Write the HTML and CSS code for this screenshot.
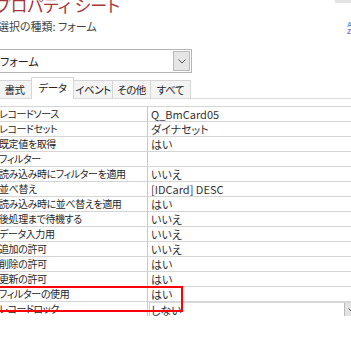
FILE: index.html
```html
<!DOCTYPE html>
<html lang="ja">
<head>
    <meta charset="UTF-8">
    <meta name="viewport" content="width=device-width, initial-scale=1.0">
    <title>プロパティ シート</title>
    <link rel="stylesheet" href="styles.css">
</head>
<body>
    <div class="sheet">
      <header class="head">
        <div class="head-text">
          <h1 class="title">プロパティ シート</h1>
          <div class="kind">選択の種類: フォーム</div>
        </div>
        <div class="head-tools">
          <span class="tool-btn"></span>
          <span class="sort-icon"><span>A</span><span>Z</span></span>
        </div>
      </header>

      <div class="combo">
        <span class="combo-text">フォーム</span>
        <span class="combo-btn">
          <svg width="8" height="5" viewBox="0 0 8 5"><path d="M0.5 0.5 L4 4 L7.5 0.5" fill="none" stroke="#555" stroke-width="1"/></svg>
        </span>
      </div>

      <div class="tabs">
        <span class="tab t1">書式</span>
        <span class="tab t2 active">データ</span>
        <span class="tab t3">イベント</span>
        <span class="tab t4">その他</span>
        <span class="tab t5">すべて</span>
      </div>

      <div class="props">
        <div class="label">レコードソース</div><div class="value">Q_BmCard05</div>
        <div class="label">レコードセット</div><div class="value">ダイナセット</div>
        <div class="label">既定値を取得</div><div class="value">はい</div>
        <div class="label">フィルター</div><div class="value"></div>
        <div class="label">読み込み時にフィルターを適用</div><div class="value">いいえ</div>
        <div class="label">並べ替え</div><div class="value">[IDCard] DESC</div>
        <div class="label">読み込み時に並べ替えを適用</div><div class="value">はい</div>
        <div class="label">後処理まで待機する</div><div class="value">いいえ</div>
        <div class="label">データ入力用</div><div class="value">いいえ</div>
        <div class="label">追加の許可</div><div class="value">いいえ</div>
        <div class="label">削除の許可</div><div class="value">はい</div>
        <div class="label">更新の許可</div><div class="value">はい</div>
        <div class="label">フィルターの使用</div><div class="value">はい</div>
        <div class="label last">レコードロック</div>
        <div class="value last">
          <div class="pick">
            <span class="pick-text">しない</span>
            <span class="pick-btn">
              <svg width="6" height="4" viewBox="0 0 6 4"><path d="M0.5 0.5 L3 3 L5.5 0.5" fill="none" stroke="#555" stroke-width="1"/></svg>
            </span>
          </div>
        </div>

        <div class="highlight"></div>
      </div>
    </div>
</body>
</html>
```

FILE: styles.css
```css
body {
  margin: 0;
  background: #fff;
  color: #2b2b2b;
  font-family: "Noto Sans CJK JP", "Noto Sans", sans-serif;
  font-feature-settings: "palt";
  overflow: hidden;
}

.sheet {
  margin-left: -6px;
  width: 363px;
}

.head {
  display: flex;
  justify-content: space-between;
  height: 49px;
}

.title {
  margin: -5px 0 0 1px;
  font-size: 17px;
  font-weight: normal;
  line-height: 20px;
  color: #a4373a;
}

.kind {
  margin: 4px 0 0 4px;
  font-size: 11px;
  line-height: 14px;
  color: #444;
}

.head-tools {
  display: flex;
  flex-direction: column;
  align-items: flex-end;
  gap: 18px;
  width: 22px;
}

.tool-btn {
  width: 22px;
  height: 3px;
  background-color: #e3e3e3;
}

.sort-icon {
  display: flex;
  flex-direction: column;
  width: 10px;
  font-size: 7px;
  line-height: 7px;
  font-weight: bold;
  font-family: "Liberation Sans", sans-serif;
}

.sort-icon span:first-child {
  color: #5b9bd5;
}

.sort-icon span:last-child {
  color: #8b72c2;
}

.combo {
  display: flex;
  align-items: center;
  justify-content: space-between;
  box-sizing: border-box;
  width: 194px;
  height: 24px;
  margin-left: 4px;
  border: 1px solid #b4b4b4;
}

.combo-text {
  padding-left: 1px;
  font-size: 11px;
  color: #222;
}

.combo-btn {
  display: flex;
  align-items: center;
  justify-content: center;
  box-sizing: border-box;
  width: 17px;
  height: 20px;
  margin-right: 1px;
  border: 1px solid #b9b9b9;
  background-color: #e5e5e5;
}

.tabs {
  display: flex;
  align-items: flex-end;
  height: 21px;
  margin-top: 4px;
  border-bottom: 1px solid #dadada;
}

.tab {
  box-sizing: border-box;
  height: 18px;
  margin-left: -1px;
  border: 1px solid #d6d6d6;
  border-bottom: none;
  background-color: #f4f4f4;
  font-size: 10.5px;
  letter-spacing: -0.4px;
  line-height: 17px;
  text-align: center;
  white-space: nowrap;
  color: #222;
}

.tab.active {
  position: relative;
  height: 22px;
  margin-bottom: -1px;
  background-color: #fff;
  line-height: 20px;
}

.t1 { width: 35px; margin-left: 3px; }
.t2 { width: 43px; }
.t3 { width: 40px; }
.t4 { width: 39px; }
.t5 { width: 41px; }

.props {
  position: relative;
  display: grid;
  grid-template-columns: 154px 1fr;
  grid-auto-rows: 15px;
  margin-top: 7px;
}

.label,
.value {
  box-sizing: border-box;
  border-top: 1px solid #d5d5d5;
  font-size: 11px;
  line-height: 14px;
  white-space: nowrap;
  overflow: hidden;
}

.label {
  padding-left: 5px;
  border-right: 1px solid #c8c8c8;
  font-size: 10px;
  letter-spacing: -0.4px;
  color: #262626;
}

.value {
  padding-left: 3px;
  color: #333;
}

.label.last,
.value.last {
  height: 17px;
}

.value.last {
  padding-left: 1px;
}

.pick {
  display: flex;
  justify-content: space-between;
  box-sizing: border-box;
  height: 16px;
  border: 1px solid #cdcdcd;
  border-top-color: #d8d8d8;
}

.pick-text {
  padding-left: 1px;
  line-height: 14px;
}

.pick-btn {
  display: flex;
  align-items: center;
  justify-content: center;
  box-sizing: border-box;
  width: 12px;
  height: 14px;
  border-left: 1px solid #b9b9b9;
  background-color: #e3e3e3;
}

.highlight {
  position: absolute;
  top: 180px;
  left: 0;
  box-sizing: border-box;
  width: 189px;
  height: 26px;
  border: 2px solid #f00;
}
```
